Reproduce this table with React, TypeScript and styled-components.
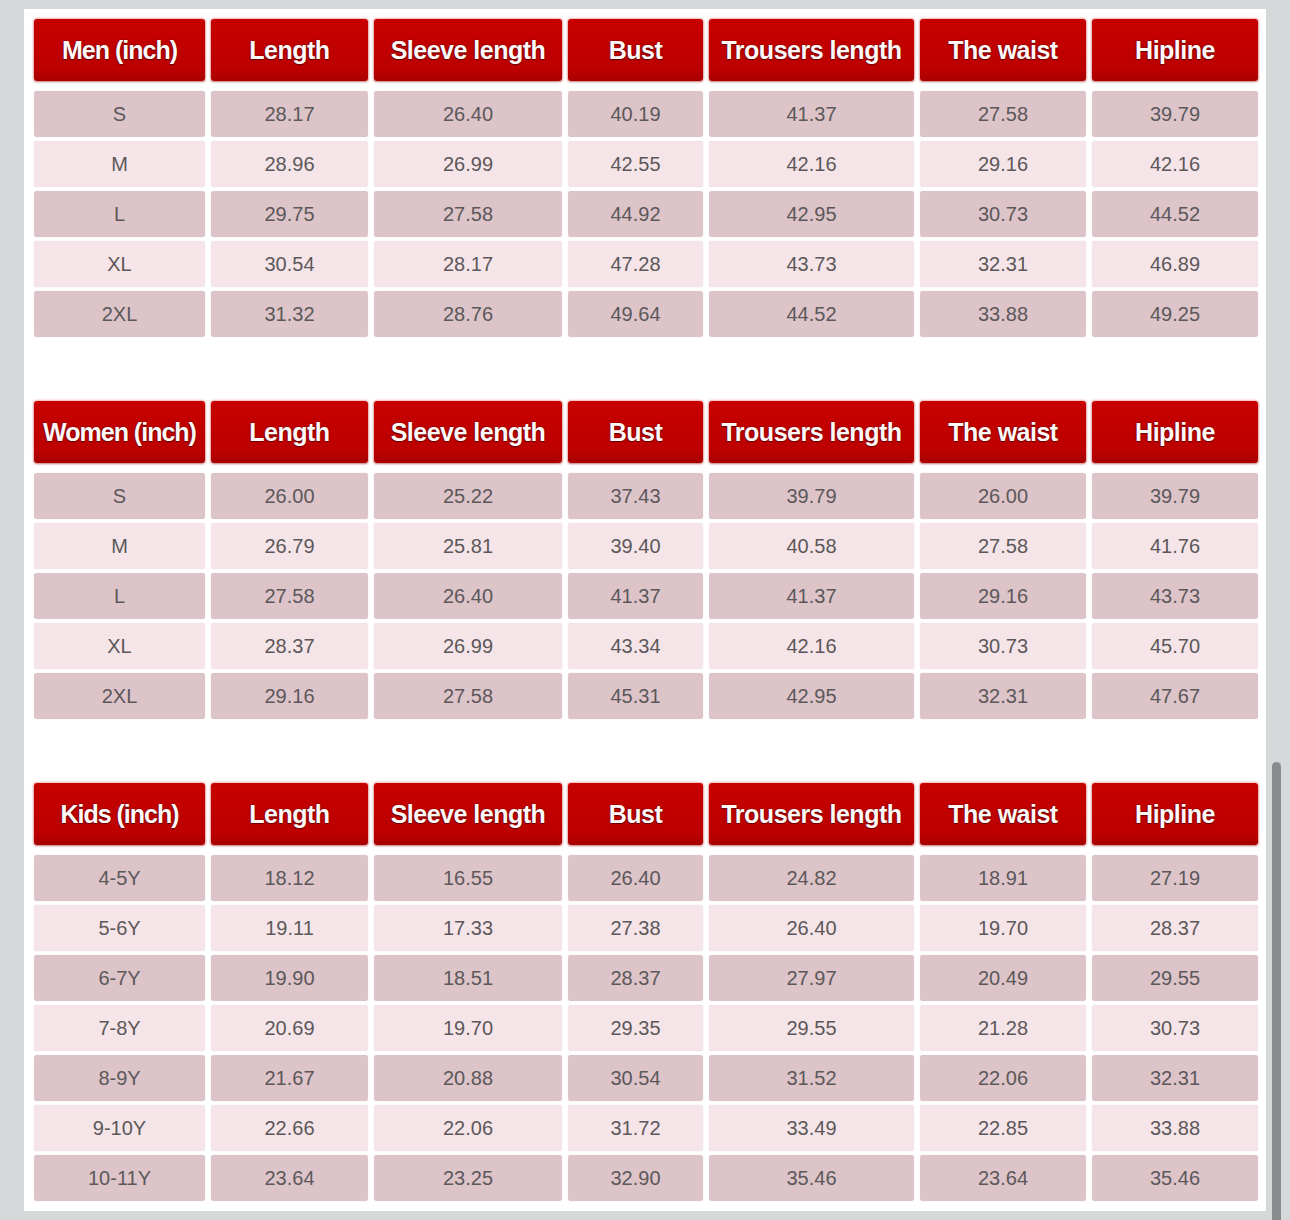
import React from "react";
import styled, { createGlobalStyle } from "styled-components";

const Global = createGlobalStyle`
  html, body { margin: 0; padding: 0; }
  body { background: #d5d9da; font-family: "Liberation Sans", Arial, sans-serif; }
`;

const Page = styled.div`
  box-sizing: border-box;
  height: 1220px;
  padding: 9px 0 0 24px;
  display: flex;
  overflow: hidden;
`;

const Panel = styled.div`
  box-sizing: border-box;
  width: 1242px;
  height: 1202px;
  background: #ffffff;
  padding: 10px 8px 8px 10px;
  display: flex;
  flex-direction: column;
  gap: 60px;
`;

const Track = styled.div`
  flex: 1;
  display: flex;
  align-items: flex-end;
  padding-left: 6px;
`;

const Thumb = styled.div`
  width: 9px;
  height: 467px;
  margin-bottom: -9px;
  background: #8a8b8c;
  border-radius: 5px 5px 0 0;
`;

const Table = styled.div`
  display: grid;
  grid-template-columns: 171px 157px 188px 135px 205px 166px 166px;
  column-gap: 6px;
`;

const HeadRow = styled.div`
  display: contents;
`;

const HeadCell = styled.div<{ $first?: boolean }>`
  height: 62px;
  margin-bottom: 10px;
  display: flex;
  align-items: center;
  justify-content: center;
  background: linear-gradient(#c70000, #bd0000 80%, #a80000);
  border-radius: 3px;
  box-shadow: 0 0 2px 1px rgba(230, 90, 90, 0.45), 0 1px 2px rgba(60, 0, 0, 0.35);
  color: #fff8f8;
  font-weight: bold;
  font-size: 25px;
  letter-spacing: ${(p) => (p.$first ? "-1px" : "-0.5px")};
  white-space: nowrap;
  text-shadow: 0 0 2px rgba(90, 0, 0, 0.9), 0 1px 1px rgba(60, 0, 0, 0.6);
`;

const Cell = styled.div<{ $dark: boolean }>`
  height: 46px;
  margin-bottom: 4px;
  display: flex;
  align-items: center;
  justify-content: center;
  background: ${(p) => (p.$dark ? "#dcc4c9" : "#f6e5e8")};
  border-radius: 3px;
  box-shadow: 0 0 1px rgba(150, 110, 115, 0.35);
  color: #5c585a;
  font-size: 20px;
  letter-spacing: 0;
`;

const cols = ["Length", "Sleeve length", "Bust", "Trousers length", "The waist", "Hipline"];

type Section = { title: string; rows: string[][] };

const sections: Section[] = [
  {
    title: "Men (inch)",
    rows: [
      ["S", "28.17", "26.40", "40.19", "41.37", "27.58", "39.79"],
      ["M", "28.96", "26.99", "42.55", "42.16", "29.16", "42.16"],
      ["L", "29.75", "27.58", "44.92", "42.95", "30.73", "44.52"],
      ["XL", "30.54", "28.17", "47.28", "43.73", "32.31", "46.89"],
      ["2XL", "31.32", "28.76", "49.64", "44.52", "33.88", "49.25"],
    ],
  },
  {
    title: "Women (inch)",
    rows: [
      ["S", "26.00", "25.22", "37.43", "39.79", "26.00", "39.79"],
      ["M", "26.79", "25.81", "39.40", "40.58", "27.58", "41.76"],
      ["L", "27.58", "26.40", "41.37", "41.37", "29.16", "43.73"],
      ["XL", "28.37", "26.99", "43.34", "42.16", "30.73", "45.70"],
      ["2XL", "29.16", "27.58", "45.31", "42.95", "32.31", "47.67"],
    ],
  },
  {
    title: "Kids (inch)",
    rows: [
      ["4-5Y", "18.12", "16.55", "26.40", "24.82", "18.91", "27.19"],
      ["5-6Y", "19.11", "17.33", "27.38", "26.40", "19.70", "28.37"],
      ["6-7Y", "19.90", "18.51", "28.37", "27.97", "20.49", "29.55"],
      ["7-8Y", "20.69", "19.70", "29.35", "29.55", "21.28", "30.73"],
      ["8-9Y", "21.67", "20.88", "30.54", "31.52", "22.06", "32.31"],
      ["9-10Y", "22.66", "22.06", "31.72", "33.49", "22.85", "33.88"],
      ["10-11Y", "23.64", "23.25", "32.90", "35.46", "23.64", "35.46"],
    ],
  },
];

export default function App() {
  return (
    <>
      <Global />
      <Page>
        <Panel>
          {sections.map((s) => (
            <Table key={s.title}>
              <HeadRow>
                <HeadCell $first>{s.title}</HeadCell>
                {cols.map((c) => (
                  <HeadCell key={c}>{c}</HeadCell>
                ))}
              </HeadRow>
              {s.rows.map((r, i) =>
                r.map((v, j) => (
                  <Cell key={`${i}-${j}`} $dark={i % 2 === 0}>
                    {v}
                  </Cell>
                ))
              )}
            </Table>
          ))}
        </Panel>
        <Track>
          <Thumb />
        </Track>
      </Page>
    </>
  );
}
